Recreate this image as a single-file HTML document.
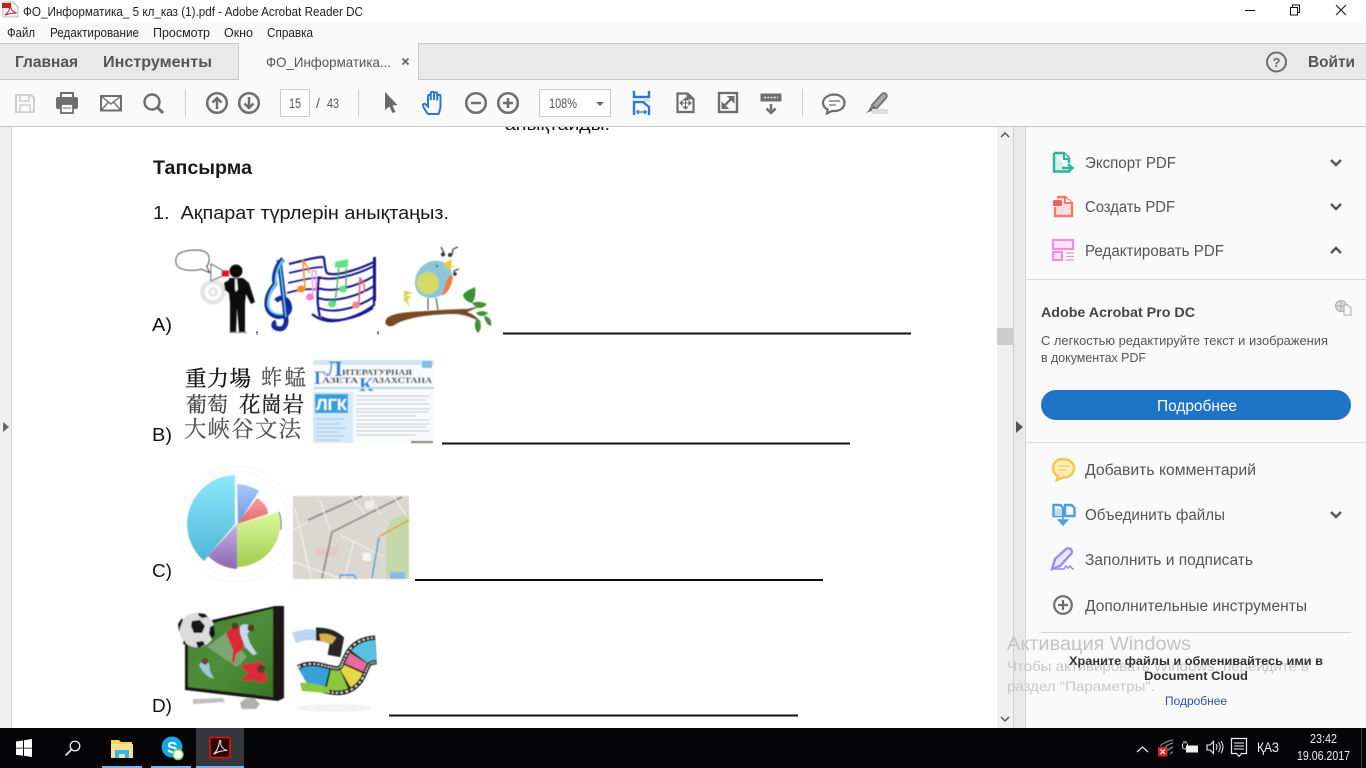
<!DOCTYPE html>
<html><head><meta charset="utf-8"><title>Acrobat</title>
<style>
html,body{margin:0;padding:0;background:#fff;width:1366px;height:768px;overflow:hidden}
svg{display:block}
text{font-family:"Liberation Sans","Noto Sans CJK SC",sans-serif}
.ic{fill:none;stroke:#6e6e6e;stroke-width:2.5}
.t{fill:#555}
</style></head><body>
<svg width="1366" height="768" viewBox="0 0 1366 768" xmlns="http://www.w3.org/2000/svg">
<defs>
<filter id="b" x="-10%" y="-10%" width="120%" height="120%"><feGaussianBlur stdDeviation="0.45"/></filter>
<filter id="b2" x="-10%" y="-10%" width="120%" height="120%"><feGaussianBlur stdDeviation="0.7"/></filter>
<linearGradient id="gc" x1="0" y1="0" x2="0" y2="1"><stop offset="0" stop-color="#8fe9fd"/><stop offset="1" stop-color="#4fb6d6"/></linearGradient>
<linearGradient id="gg" x1="0" y1="0" x2="0" y2="1"><stop offset="0" stop-color="#dcfb9c"/><stop offset="1" stop-color="#a0cc50"/></linearGradient>
<linearGradient id="gp" x1="0" y1="0" x2="0" y2="1"><stop offset="0" stop-color="#c8b0e8"/><stop offset="1" stop-color="#8a68b0"/></linearGradient>
<linearGradient id="gr" x1="0" y1="0" x2="0" y2="1"><stop offset="0" stop-color="#f4a0a0"/><stop offset="1" stop-color="#e06868"/></linearGradient>
<linearGradient id="gb" x1="0" y1="0" x2="0" y2="1"><stop offset="0" stop-color="#a8c8fa"/><stop offset="1" stop-color="#6c98e0"/></linearGradient>
<linearGradient id="gf" x1="0" y1="0" x2="1" y2="1"><stop offset="0" stop-color="#3f7f30"/><stop offset=".5" stop-color="#4f8f3a"/><stop offset="1" stop-color="#3a7428"/></linearGradient>
<clipPath id="docclip"><rect x="12" y="127" width="985" height="601"/></clipPath>
</defs>

<!-- base -->
<rect width="1366" height="768" fill="#fff"/>

<!-- document -->
<rect x="0" y="127" width="12" height="601" fill="#eeeeee"/>
<rect x="11" y="127" width="1" height="601" fill="#d4d4d4"/>
<path d="M3 422l6 5-6 5z" fill="#666"/>
<g clip-path="url(#docclip)">
<text x="505" y="130" font-size="17" fill="#111" textLength="105" lengthAdjust="spacingAndGlyphs">анықтайды.</text>
<text x="153" y="174" font-size="19.500" font-weight="700" fill="#1a1a1a" textLength="99" lengthAdjust="spacingAndGlyphs">Тапсырма</text>
<text x="153" y="219" font-size="18.500" fill="#1a1a1a" textLength="296" lengthAdjust="spacingAndGlyphs" xml:space="preserve">1.  Ақпарат түрлерін анықтаңыз.</text>
<text x="152" y="331" font-size="18" fill="#111" textLength="20" lengthAdjust="spacingAndGlyphs">A)</text>
<text x="152" y="441" font-size="18" fill="#111" textLength="20" lengthAdjust="spacingAndGlyphs">B)</text>
<text x="152" y="577" font-size="18" fill="#111" textLength="20" lengthAdjust="spacingAndGlyphs">C)</text>
<text x="152" y="712" font-size="18" fill="#111" textLength="20" lengthAdjust="spacingAndGlyphs">D)</text>
<text x="255" y="333" font-size="14" fill="#111">,</text>
<text x="376" y="333" font-size="14" fill="#111">,</text>
<rect x="503" y="332.500" width="408" height="2" fill="#111"/>
<rect x="442" y="442.500" width="408" height="2" fill="#111"/>
<rect x="415" y="579" width="408" height="2" fill="#111"/>
<rect x="389" y="714.500" width="409" height="2" fill="#111"/>

<!-- A: man -->
<g filter="url(#b)">
<circle cx="213" cy="292" r="10.500" fill="none" stroke="#e4e4e4" stroke-width="4.500"/>
<circle cx="213" cy="292" r="3.500" fill="none" stroke="#e4e4e4" stroke-width="3"/>
<path d="M190 250.500c8-1 15 0 18 4 2 4 1 9-1.500 12l3 6-8-3.500c-7 2-18 2-23-2-4-4-3-9 0-13 3-2 7-3 11.500-3.500z" fill="#fff" stroke="#222" stroke-width="1"/>
<path d="M211 264l11 6v6l-11 5z" fill="#fff" stroke="#555" stroke-width="1"/>
<rect x="222" y="270.500" width="7" height="6" fill="#e8101a"/>
<circle cx="236" cy="271" r="6.500" fill="#111"/>
<path d="M229 278h14l6 5 6 19-4 2-5-10-1 9v29h-6l-2-24-1 24h-6v-29l-1-10-4-3-1-7 5-3z" fill="#111"/>
<path d="M235 279h2l1 10-2 3-1-3z" fill="#eee"/>
<rect x="229" y="332" width="18" height="1" fill="#888"/>
</g>
<!-- A: music -->
<g filter="url(#b)" fill="none">
<path d="M289 264c10-2 24-7 34-7 2 0 1 11 4 16 8 4 30-3 47-11v43c-10 8-26 15-40 16-8 1-16-2-22-7" stroke="#14188a" stroke-width="2.200"/>
<path d="M289 273c10-2 24-6 34-6M288 283c10-2 24-6 33-5M287 293c10-3 22-5 32-3" stroke="#14188a" stroke-width="1.700"/>
<path d="M318 277c14 5 38-2 56-11M318 288c14 5 38-1 56-12M318 298c16 5 38-1 56-12M319 308c14 6 36 1 55-11M321 317c12 6 34 3 52-9" stroke="#14188a" stroke-width="2"/>
<path d="M319 277c-2 14-2 28 1 40" stroke="#14188a" stroke-width="2.200"/>
<rect x="373" y="257" width="3" height="44" fill="#14188a"/>
<path d="M283 259c-7 7-10 17-8 25-6 7-9 14-8 22 1 8 9 12 16 10 6-2 8-7 6-12-2-6-9-8-13-3M279 260c2 14 5 40 7 58 1 8-3 13-10 10-3-1-3-5 0-6" stroke="#152a9a" stroke-width="4.800"/>
<path d="M283 260c-6 8-8 16-7 24-6 7-8 14-8 21 2 8 9 10 15 9" stroke="#66dcf0" stroke-width="1.800"/>
<path d="M280 265c2 16 4 36 6 52" stroke="#66dcf0" stroke-width="1.200"/>
<ellipse cx="301" cy="289" rx="4" ry="3.500" fill="#ee8f24"/><path d="M305 288l-2-27c2 3 6 6 6 12" stroke="#ee8f24" stroke-width="1.500"/>
<ellipse cx="310" cy="297" rx="4" ry="3.500" fill="#ee7fd8"/><path d="M313 295l-1-24h4v20" stroke="#ee9fe0" stroke-width="1.500"/>
<ellipse cx="332" cy="304" rx="4" ry="3.500" fill="#60e080"/><path d="M335 303l4-35" stroke="#3f9a50" stroke-width="1.200"/>
<path d="M335 268l0-6 13-3v8z" fill="#60e080"/>
<ellipse cx="343" cy="289" rx="4" ry="3.500" fill="#60e080"/><path d="M346 288v-20" stroke="#3f9a50" stroke-width="1.200"/>
<ellipse cx="356" cy="305" rx="4" ry="3.500" fill="#f08a90"/><path d="M359 304l1-26c3 3 5 8 4 14" stroke="#e06070" stroke-width="1.500"/>
</g>
<!-- A: bird -->
<g filter="url(#b)">
<path d="M387 318c8-6 24-6 40-7 14-1 30-2 40-2l14-3-14 6c6 2 12 7 15 11-8-5-18-9-28-9-20 0-46 3-58 10-6 5-14 1-9-6z" fill="#7a4a22"/>
<path d="M415 285c-1-15 11-26 24-24 8 1 13 7 13 14 1 12-7 22-20 23-10 0-16-5-17-13z" fill="#8cc6da"/>
<circle cx="428" cy="283" r="11" fill="#d6da62"/>
<path d="M442 296c7-4 10-11 11-20l-3-1c-4 5-6 13-8 21z" fill="#ee7d3c"/>
<path d="M443 264l9-5-1 7 5 0-8 3z" fill="#f0cc30"/>
<circle cx="437" cy="266" r="1" fill="#222"/>
<path d="M404 290l9 3-7 2 6 2-4 2 2 10-4-8-2 1z" fill="#d8d860"/>
<path d="M428 298v12M436 298l2 12" stroke="#555" stroke-width="1.200"/>
<path d="M463 295c3-5 9-6 12-8 1 7 0 12-3 16-4-1-8-3-9-8zM472 303c5-2 11-1 15 1-4 5-10 6-15-1zM476 313c4-3 10-2 12 0-4 4-9 4-12 0zM477 318c-3 5-3 11 1 15 4-4 4-10-1-15zM484 316c1 5 3 9 7 10 1-4 0-9-7-10z" fill="#3e9230"/>
<path d="M441 247l3 6M453 249l-1 6M458 247l-5 2M459 269l-5 2v3" fill="none" stroke="#333" stroke-width="1.200"/>
<circle cx="443" cy="254.500" r="2" fill="#333"/><circle cx="450" cy="255" r="2" fill="#333"/>
<circle cx="455" cy="274" r="1.800" fill="#333"/>
</g>
<!-- B: hanzi -->
<g>
<text x="185" y="386" font-size="21.500" fill="#111" stroke="#111" stroke-width=".35" style="font-family:'Noto Serif CJK TC','Noto Serif CJK SC',serif" textLength="66">重力場</text>
<text x="261" y="385" font-size="21.500" fill="#555" stroke="#555" stroke-width=".2" style="font-family:'Noto Serif CJK SC',serif" textLength="45">蚱蜢</text>
<text x="186" y="412" font-size="21" fill="#444" stroke="#444" stroke-width=".2" style="font-family:'Noto Serif CJK SC',serif" textLength="42">葡萄</text>
<text x="239" y="412" font-size="21.500" fill="#222" stroke="#222" stroke-width=".3" style="font-family:'Noto Serif CJK SC',serif" textLength="65">花崗岩</text>
<text x="184" y="437" font-size="22.500" fill="#555" stroke="#555" stroke-width=".2" style="font-family:'Noto Serif CJK SC',serif" textLength="117">大峽谷文法</text>
</g>
<!-- B: newspaper -->
<g filter="url(#b)">
<rect x="313" y="360" width="121" height="83" fill="#f8fafb"/>
<rect x="313" y="360" width="121" height="5" fill="#d4e6f2"/>
<rect x="422" y="361" width="10" height="7" fill="#7cc0de"/>
<text x="342" y="375" font-size="8" font-weight="700" fill="#222" textLength="70" lengthAdjust="spacingAndGlyphs" style="font-family:'Liberation Serif',serif">ИТЕРАТУРНАЯ</text>
<text x="322" y="383" font-size="8" font-weight="700" fill="#222" textLength="36" lengthAdjust="spacingAndGlyphs" style="font-family:'Liberation Serif',serif">АЗЕТА</text>
<text x="372" y="383" font-size="8" font-weight="700" fill="#222" textLength="60" lengthAdjust="spacingAndGlyphs" style="font-family:'Liberation Serif',serif">АЗАХСТАНА</text>
<text x="314" y="384" font-size="19" font-weight="700" fill="#2c7fd0" style="font-family:'Liberation Serif',serif">Г</text>
<text x="326" y="376" font-size="22" font-weight="700" fill="#2c7fd0" style="font-family:'Liberation Serif',serif">Л</text>
<text x="359" y="391" font-size="20" font-weight="700" fill="#2c7fd0" style="font-family:'Liberation Serif',serif">К</text>
<rect x="313" y="387" width="121" height="2" fill="#b8d8ee"/>
<rect x="313" y="392" width="40" height="51" fill="#d6e9f7"/>
<rect x="315" y="394" width="33" height="19" fill="#35a0dc"/>
<text x="316" y="410" font-size="16" font-weight="700" fill="#fff" textLength="31" lengthAdjust="spacingAndGlyphs">ЛГК</text>
<path d="M316 419h28M316 424h24M316 428h30M316 432h22M316 436h28M316 440h24" stroke="#9ac8e8" stroke-width="1"/>
<path d="M356 396h74M356 400h70M356 404h74M356 409h74M356 412h72M356 416h60M356 420h74M356 424h74M356 427h70M356 431h74M356 435h60" stroke="#c2c7cc" stroke-width="1"/>
<rect x="411" y="441" width="22" height="2" fill="#8a7868"/>
</g>
<!-- C: pie -->
<g filter="url(#b)">
<circle cx="236" cy="524" r="58" fill="none" stroke="#f5f5f5" stroke-width="1"/>
<circle cx="236" cy="524" r="53" fill="none" stroke="#f6f6f6" stroke-width="1"/>
<path d="M235 524L235 475A49 49 0 0 0 204 561Z" fill="url(#gc)"/>
<path d="M237 524L208 556A46 46 0 0 0 237 569Z" fill="url(#gp)"/>
<path d="M237 524L279 512A44 44 0 0 1 237 567Z" fill="url(#gg)"/>
<path d="M279 512A44 44 0 0 1 281 530" fill="none" stroke="#666" stroke-width="1"/>
<path d="M237 524L257 498Q268 505 268 514Z" fill="url(#gr)"/>
<path d="M238 524L237 484Q250 485 259 491Z" fill="url(#gb)"/>
</g>
<!-- C: map -->
<g filter="url(#b)">
<rect x="293" y="496" width="116" height="83" fill="#dbd8d0"/>
<path d="M386 530l5-10 18-9v68h-23z" fill="#c4d9aa"/>
<rect x="390" y="572" width="15" height="7" fill="#8cb8e8"/>
<rect x="316" y="547" width="22" height="9" fill="#e6c9c5"/>
<path d="M332 532l70-35M332 532l-10 46M308 520l54-24" stroke="#8f8c88" stroke-width="1.800" fill="none"/>
<path d="M295 508l16 70M293 530l15-8M350 496l15 18M370 496l10 18M293 562l50 17M340 535l44 22M354 540l-10 39M393 496l14 20M320 500l10 30" stroke="#f2f0ea" stroke-width="1.200" fill="none"/>
<path d="M379 537l-7 41" stroke="#3c9ce8" stroke-width="1.500" fill="none"/>
<path d="M380 536l29-16" stroke="#e89a2a" stroke-width="1.500" fill="none"/>
<path d="M340 575h14l2 4M340 575v4" stroke="#3c9ce8" stroke-width="1.500" fill="none"/>
<rect x="363" y="553" width="8" height="8" fill="#f6f6f2"/>
<rect x="365" y="501" width="9" height="8" fill="#f0eee8"/>
</g>
<!-- D: TV -->
<g filter="url(#b)">
<path d="M193 699l30-1 2 4-32 2z" fill="#c0c0c0"/>
<path d="M240 703l6-5 8 0 6 6-4 5-14 0z" fill="#b0b0b0"/>
<path d="M185 690L185 638 212 620 275 606h9v92l-6 3z" fill="#1e1616"/>
<path d="M188 687V640l25-17 60-14.500V697z" fill="url(#gf)"/>
<path d="M207 647l30 20 10-10-20-25z" fill="#9fb59f" opacity=".6"/>
<path d="M226 633c3-4 8-6 11-6 5-2 7 3 5 6l-1 6 4 0-3 11-6 4-2 9-2-1 1-12-4-10z" fill="#d92c34"/>
<path d="M240 627c1-2 5-4 8-2 3 3 2 7-1 9l3 9 7 11-4 1-8-8-5-14z" fill="#c6d8ec"/>
<circle cx="235" cy="626" r="3.500" fill="#5a3a20"/>
<circle cx="251" cy="628" r="3.500" fill="#5a3a20"/>
<path d="M199 665c3-5 8-5 10-2l1 8 4 8-5-2-6-5z" fill="#a0c8d8"/>
<circle cx="205" cy="661" r="3.500" fill="#6a4a30"/>
<path d="M240 665l14-2c5-3 10-1 10 5l3 12-6 3-7-3-13 1 7-8z" fill="#d92c34"/>
<circle cx="261" cy="669" r="4" fill="#5a3a20"/>
<circle cx="197" cy="630" r="17.500" fill="#dcdcdc"/>
<path d="M192 621l8-1 5 6-3 7-8 0-3-7zM183 620l-3 8-1 4-1-8 4-6zM199 613l6 1 3 3-6 1-4-3zM214 625l1 10-3 4-3-5 1-7zM196 642l7-1 2 4-7 3zM184 640l3 5-4-1z" fill="#151515"/>
</g>
<!-- D: film -->
<g filter="url(#b)" fill="none">
<ellipse cx="335" cy="708" rx="38" ry="4" fill="#f2f2f2"/>
<path d="M294 638c10-4 20-4 28-2l16 6" stroke="#a8c8e8" stroke-width="11" opacity=".75"/>
<path d="M316 634c8 0 16 2 21 6l-3 16" stroke="#282828" stroke-width="13"/>
<path d="M320 638c5-1 10 0 14 3" stroke="#d8b048" stroke-width="8"/>
<path d="M304 678C318 670 340 692 352 672C358 660 358 651 376 650" stroke="#222" stroke-width="29"/>
<path d="M304 678C318 670 340 692 352 672C358 660 358 651 376 650" stroke="#eee" stroke-width="26" stroke-dasharray="1.500 1.500"/>
<path d="M304 678C318 670 340 692 352 672C358 660 358 651 376 650" stroke="#222" stroke-width="23"/>
<path d="M304 678C318 670 340 692 352 672C358 660 358 651 376 650" stroke="#38a2d8" stroke-width="20" pathLength="100" stroke-dasharray="27 73"/>
<path d="M304 678C318 670 340 692 352 672C358 660 358 651 376 650" stroke="#8cc83c" stroke-width="20" pathLength="100" stroke-dasharray="18 82" stroke-dashoffset="-29"/>
<path d="M304 678C318 670 340 692 352 672C358 660 358 651 376 650" stroke="#e8d848" stroke-width="20" pathLength="100" stroke-dasharray="14 86" stroke-dashoffset="-49"/>
<path d="M304 678C318 670 340 692 352 672C358 660 358 651 376 650" stroke="#e86a9c" stroke-width="20" pathLength="100" stroke-dasharray="12 88" stroke-dashoffset="-65"/>
<path d="M304 678C318 670 340 692 352 672C358 660 358 651 376 650" stroke="#58c0e0" stroke-width="20" pathLength="100" stroke-dasharray="21 79" stroke-dashoffset="-79"/>
<path d="M300 683c10-2 22 4 30 4l-2 6-26-2z" fill="#8cc83c" stroke="none"/>
</g>
</g>

<!-- scrollbar -->
<rect x="997" y="127" width="16" height="601" fill="#f0f0f0"/>
<rect x="997" y="328" width="16" height="17" fill="#cdcdcd"/>
<path d="M1001 137l4-4 4 4" fill="none" stroke="#555" stroke-width="1.500"/>
<path d="M1001 717l4 4 4-4" fill="none" stroke="#555" stroke-width="1.500"/>
<rect x="1013" y="127" width="12" height="601" fill="#e9e9e9"/>
<rect x="1013" y="127" width="1" height="601" fill="#cfcfcf"/>
<rect x="1025" y="127" width="1" height="601" fill="#d6d6d6"/>
<path d="M1016 421l7 6-7 6z" fill="#555"/>

<!-- right panel -->
<rect x="1026" y="127" width="340" height="601" fill="#fafafa"/>
<g font-size="15.500">
<text x="1085" y="168" textLength="91" lengthAdjust="spacingAndGlyphs" fill="#555">Экспорт PDF</text>
<text x="1085" y="212" textLength="90" lengthAdjust="spacingAndGlyphs" fill="#555">Создать PDF</text>
<text x="1085" y="256" textLength="139" lengthAdjust="spacingAndGlyphs" fill="#555">Редактировать PDF</text>
<text x="1085" y="475" textLength="171" lengthAdjust="spacingAndGlyphs" fill="#555">Добавить комментарий</text>
<text x="1085" y="520" textLength="140" lengthAdjust="spacingAndGlyphs" fill="#555">Объединить файлы</text>
<text x="1085" y="565" textLength="168" lengthAdjust="spacingAndGlyphs" fill="#555">Заполнить и подписать</text>
<text x="1085" y="611" textLength="222" lengthAdjust="spacingAndGlyphs" fill="#555">Дополнительные инструменты</text>
</g>
<g fill="none" stroke="#555" stroke-width="2.400">
<path d="M1331 160l5 5 5-5"/><path d="M1331 204l5 5 5-5"/><path d="M1331 253l5-5 5 5"/><path d="M1331 512l5 5 5-5"/>
</g>
<rect x="1026" y="279" width="340" height="1" fill="#dcdcdc"/>
<rect x="1026" y="442" width="340" height="1" fill="#dcdcdc"/>
<text x="1041" y="317" font-size="13.500" font-weight="700" fill="#444" textLength="154" lengthAdjust="spacingAndGlyphs">Adobe Acrobat Pro DC</text>
<text x="1041" y="345" font-size="13" fill="#555" textLength="287" lengthAdjust="spacingAndGlyphs">С легкостью редактируйте текст и изображения</text>
<text x="1041" y="362" font-size="13" fill="#555" textLength="105" lengthAdjust="spacingAndGlyphs">в документах PDF</text>
<rect x="1041" y="390" width="310" height="30" rx="15" fill="#2074c8"/>
<text x="1157" y="411" font-size="15.500" fill="#fff" textLength="80" lengthAdjust="spacingAndGlyphs">Подробнее</text>
<!-- panel icons -->
<path d="M1054 153h10l5 5v5M1069 170v1.500h-15V153" fill="#d8efea" stroke="#2fb297" stroke-width="2.400"/>
<path d="M1064 153v6h5" fill="#fff" stroke="#2fb297" stroke-width="2"/>
<path d="M1062 168h9M1068 164l4.500 4-4.500 4" fill="none" stroke="#2fb297" stroke-width="2.400"/>
<path d="M1057 197h8l7 6v13h-17v-9" fill="#fde0dc" stroke="#f27a6a" stroke-width="2.400"/>
<path d="M1065 197v6h7" fill="#fff" stroke="#f27a6a" stroke-width="2"/>
<rect x="1053" y="200" width="9" height="6" rx="1.500" fill="#f0605a"/>
<rect x="1053" y="240" width="20" height="9" fill="#fbe4f7" stroke="#ef8de0" stroke-width="2.200"/>
<rect x="1053" y="252" width="9" height="8" fill="#fbe4f7" stroke="#ef8de0" stroke-width="2.200"/>
<path d="M1066 253h8M1066 256.500h8M1066 260h8" stroke="#ef8de0" stroke-width="1.200"/>
<circle cx="1341" cy="306" r="5.500" fill="#ddd" stroke="#aaa" stroke-width="1"/>
<path d="M1341 300v12M1335.500 306h11" stroke="#aaa" stroke-width="1"/>
<path d="M1344 305h4l3 3v7h-7z" fill="#fafafa" stroke="#aaa" stroke-width="1"/>
<path d="M1063 459c6 0 11 4 11 9.500s-5 9-11 9l-6 2.500 1-4c-3-1.500-5-4-5-7.500 0-5.500 4-9.500 10-9.500z" fill="#fdeeb8" stroke="#f8c453" stroke-width="2.500"/>
<path d="M1058 466h11M1058 470h8" stroke="#f8c453" stroke-width="1.200"/>
<path d="M1053.500 505h7l2.500 3v8h-9.500zM1065 505h6.500l3 3v8H1065z" fill="#fafafa" stroke="#4aa0e0" stroke-width="2.400"/>
<rect x="1055" y="509" width="7" height="7" fill="#bfdff6"/>
<path d="M1063 516v5M1058.500 520h9l-4.500 5z" fill="#4aa0e0" stroke="#4aa0e0" stroke-width="1.500"/>
<path d="M1052 569l3-10 11-10c2-1.500 4-.5 5 .5s1.500 3 0 4.500l-11 12z" fill="#e9e5fc" stroke="#9a8cf0" stroke-width="2.400"/>
<path d="M1053 569h11c1 0 1-3 2-3s1 2 2 2 1-2 2-2 1 3 4 3" fill="none" stroke="#9a8cf0" stroke-width="1.500"/>
<circle cx="1063" cy="605" r="8.800" fill="none" stroke="#6e6e6e" stroke-width="2.200"/>
<path d="M1058 605h10M1063 600v10" stroke="#6e6e6e" stroke-width="2.200"/>
<rect x="1041" y="632" width="310" height="1" fill="#d4d4d4"/>
<text x="1007" y="650" font-size="19" fill="#c4c4c4" textLength="184" lengthAdjust="spacingAndGlyphs">Активация Windows</text>
<text x="1007" y="671" font-size="14" fill="#c8c8c8" textLength="302" lengthAdjust="spacingAndGlyphs">Чтобы активировать Windows, перейдите в</text>
<text x="1007" y="691" font-size="14" fill="#c8c8c8" textLength="148" lengthAdjust="spacingAndGlyphs">раздел "Параметры".</text>
<text x="1069" y="665" font-size="12" font-weight="700" fill="#333" textLength="254" lengthAdjust="spacingAndGlyphs">Храните файлы и обменивайтесь ими в</text>
<text x="1144" y="680" font-size="12" font-weight="700" fill="#333" textLength="104" lengthAdjust="spacingAndGlyphs">Document Cloud</text>
<text x="1165" y="705" font-size="12" fill="#2a50b0" textLength="62" lengthAdjust="spacingAndGlyphs">Подробнее</text>

<!-- title bar -->
<rect x="0" y="0" width="1366" height="23" fill="#fff"/>
<path d="M3 2h10l5 5v10H3z" fill="#f4f4f4" stroke="#bbb" stroke-width="1"/>
<rect x="2" y="3" width="9" height="5" fill="#c81e1e"/>
<path d="M5 15c3-2 5-6 5.500-9 .5 4 2.500 6 6 7-3 0-7 .5-11.500 2z" fill="none" stroke="#c81e1e" stroke-width="1"/>
<text x="23" y="16" font-size="12.500" fill="#222" textLength="340" lengthAdjust="spacingAndGlyphs">ФО_Информатика_ 5 кл_каз (1).pdf - Adobe Acrobat Reader DC</text>
<rect x="1245" y="10" width="10" height="1" fill="#111"/>
<path d="M1290.500 7.500h7v7.500h-7zM1292.500 7.500v-2.500h7v7.500h-2" fill="none" stroke="#111" stroke-width="1"/>
<path d="M1336 5l10 10M1346 5l-10 10" stroke="#111" stroke-width="1"/>

<!-- menu -->
<rect x="0" y="23" width="1366" height="20" fill="#f9f9f9"/>
<g font-size="12.500" fill="#222">
<text x="7" y="37" textLength="28" lengthAdjust="spacingAndGlyphs">Файл</text>
<text x="50" y="37" textLength="89" lengthAdjust="spacingAndGlyphs">Редактирование</text>
<text x="153" y="37" textLength="57" lengthAdjust="spacingAndGlyphs">Просмотр</text>
<text x="224" y="37" textLength="29" lengthAdjust="spacingAndGlyphs">Окно</text>
<text x="267" y="37" textLength="46" lengthAdjust="spacingAndGlyphs">Справка</text>
</g>
<!-- tabs -->
<rect x="0" y="43" width="1366" height="1" fill="#c8c8c8"/>
<rect x="0" y="44" width="1366" height="35" fill="#e9e9e9"/>
<rect x="0" y="79" width="1366" height="1" fill="#c8c8c8"/>
<rect x="239" y="43" width="179" height="37" fill="#fafafa"/>
<rect x="238" y="43" width="1" height="37" fill="#c8c8c8"/>
<rect x="418" y="43" width="1" height="37" fill="#c8c8c8"/>
<text x="15" y="67" font-size="16" font-weight="700" fill="#555" textLength="63" lengthAdjust="spacingAndGlyphs">Главная</text>
<text x="103" y="67" font-size="16" font-weight="700" fill="#555" textLength="109" lengthAdjust="spacingAndGlyphs">Инструменты</text>
<text x="266" y="67" font-size="14" fill="#555" textLength="125" lengthAdjust="spacingAndGlyphs">ФО_Информатика...</text>
<path d="M402.500 58.500l6 6M408.500 58.500l-6 6" stroke="#666" stroke-width="1.800"/>
<circle cx="1276.500" cy="62" r="9.500" fill="none" stroke="#6e6e6e" stroke-width="2"/>
<text x="1272.500" y="67" font-size="13" font-weight="700" fill="#6e6e6e">?</text>
<text x="1308" y="67" font-size="16" font-weight="700" fill="#555" textLength="47" lengthAdjust="spacingAndGlyphs">Войти</text>

<!-- toolbar -->
<rect x="0" y="80" width="1366" height="46" fill="#fafafa"/>
<rect x="0" y="126" width="1366" height="1" fill="#c8c8c8"/>
<!-- save -->
<path d="M16 95h15l3 3v14H16z" fill="none" stroke="#cfcfcf" stroke-width="2"/>
<rect x="20" y="95" width="9" height="6" fill="none" stroke="#cfcfcf" stroke-width="1.500"/>
<rect x="20" y="105" width="10" height="7" fill="#fafafa" stroke="#cfcfcf" stroke-width="1.500"/>
<!-- print -->
<rect x="61" y="93" width="12" height="5" fill="none" stroke="#6e6e6e" stroke-width="2"/>
<rect x="56" y="97" width="22" height="12" rx="2" fill="#6e6e6e"/>
<rect x="61" y="104" width="12" height="9" fill="#fafafa" stroke="#6e6e6e" stroke-width="1.800"/>
<path d="M63 108h8" stroke="#6e6e6e" stroke-width="1"/>
<!-- mail -->
<rect x="101" y="96" width="20" height="14.500" fill="none" stroke="#6e6e6e" stroke-width="2"/>
<path d="M101 96l10 8 10-8M101 110.500l7.500-8.500M121 110.500l-7.500-8.500" fill="none" stroke="#6e6e6e" stroke-width="1.400"/>
<!-- search -->
<circle cx="152" cy="102" r="7.500" fill="none" stroke="#6e6e6e" stroke-width="2.400"/>
<path d="M157.500 107.500l5.500 5.500" stroke="#6e6e6e" stroke-width="3"/>
<rect x="185" y="89" width="1" height="28" fill="#cfcfcf"/>
<!-- up/down -->
<circle cx="217" cy="103" r="9.800" class="ic"/><path d="M217 109v-11M212.500 102.500l4.500-4.500 4.500 4.500" class="ic"/>
<circle cx="249" cy="103" r="9.800" class="ic"/><path d="M249 97v11M244.500 103.500l4.500 4.500 4.500-4.500" class="ic"/>
<rect x="280.500" y="89.500" width="29" height="27" fill="#fff" stroke="#ccc"/>
<text x="289" y="108" font-size="14" fill="#555" textLength="12" lengthAdjust="spacingAndGlyphs">15</text>
<text x="316" y="108" font-size="14" fill="#555">/</text>
<text x="327" y="108" font-size="14" fill="#555" textLength="12" lengthAdjust="spacingAndGlyphs">43</text>
<rect x="358" y="89" width="1" height="28" fill="#cfcfcf"/>
<!-- cursor -->
<path d="M385 92l12.500 13-5 .5 3 6.500-3 1-3-6.500-4.500 3.500z" fill="#6a6a6a"/>
<!-- hand -->
<path d="M428 114c-2-3-5-6-5-9 0-1.500 2-1.500 3-.5l2 2V96c0-1.500 2.800-1.500 2.800 0v4-7c0-1.500 3.200-1.500 3.200 0v7-6.500c0-1.500 3.200-1.500 3.200 0v7-4.500c0-1.500 3.300-1.500 3.300 0v10c0 3-1 5-2 8z" fill="none" stroke="#2b7ad0" stroke-width="2"/>
<!-- zoom -->
<circle cx="476" cy="103" r="9.800" class="ic"/><path d="M471 103h10" class="ic"/>
<circle cx="508" cy="103" r="9.800" class="ic"/><path d="M503 103h10M508 98v10" class="ic"/>
<rect x="539.500" y="89.500" width="71" height="27" fill="#fff" stroke="#ccc"/>
<text x="549" y="108" font-size="14" fill="#555" textLength="28" lengthAdjust="spacingAndGlyphs">108%</text>
<path d="M596 102h8l-4 4z" fill="#666"/>
<!-- fit width -->
<path d="M634 91v6h15v-6" fill="none" stroke="#2b7ad0" stroke-width="2.400"/>
<rect x="643" y="98" width="7" height="4" fill="#dcdcdc"/>
<path d="M634 115v-13h9l6 5v8" fill="none" stroke="#2b7ad0" stroke-width="2.400"/>
<path d="M637 112h9M639 110l-2.500 2 2.500 2M644 110l2.500 2-2.500 2" fill="none" stroke="#2b7ad0" stroke-width="1.200"/>
<!-- full page -->
<path d="M677.500 93.500h10l6 5.500v13h-16z" fill="none" stroke="#6e6e6e" stroke-width="2.200"/>
<path d="M687 94v5h6M680 103h11M685.500 98v11M680 103l2-2v4zM691 103l-2-2v4zM685.500 98l-2 2h4zM685.500 109l-2-2h4z" fill="#6e6e6e" stroke="#6e6e6e" stroke-width="1"/>
<!-- fullscreen -->
<rect x="719" y="93" width="18" height="19" fill="none" stroke="#6e6e6e" stroke-width="2.400"/>
<path d="M728 96.500h6v6zM728 108.500h-6v-6z" fill="#6e6e6e" stroke="#6e6e6e"/>
<path d="M732 98l-8 8" stroke="#6e6e6e" stroke-width="2.400"/>
<!-- read -->
<rect x="760.500" y="93.500" width="21" height="8" fill="#6e6e6e"/>
<path d="M764 97.500h14" stroke="#eee" stroke-width="1.600" stroke-dasharray="2 1.300"/>
<path d="M771 104v9M766.500 108.500l4.500 4.500 4.500-4.500" class="ic"/>
<rect x="802" y="89" width="1" height="28" fill="#cfcfcf"/>
<!-- comment -->
<path d="M834 94.500c6 0 10.500 3.600 10.500 8.500s-4.500 8-10.500 8h-2l-5 2.500 .5-4c-2.700-1.500-4.500-3.800-4.500-6.500 0-4.900 5.500-8.500 11.500-8.500z" fill="none" stroke="#6e6e6e" stroke-width="2.200"/>
<path d="M829 101h11M829 105h7" stroke="#6e6e6e" stroke-width="1.200"/>
<!-- highlight -->
<path d="M872 105l10-11c1-1 3-1 4 0s1 3 0 4l-10 11z" fill="#aaa" stroke="#777" stroke-width="2"/>
<path d="M872 105l4 4-5 2-2-2zM866 113l4-4 2 2z" fill="#777"/>
<rect x="872" y="109" width="16" height="5" fill="#dcdcdc"/>

<!-- taskbar -->
<rect x="0" y="728" width="1366" height="40" fill="#050507"/>
<rect x="196" y="728" width="48" height="40" fill="#36373b"/>
<rect x="102" y="766" width="40" height="2" fill="#76b9ed"/>
<rect x="151" y="766" width="40" height="2" fill="#76b9ed"/>
<rect x="196" y="766" width="48" height="2" fill="#76b9ed"/>
<path d="M16 741.500l7-1v7.200h-7zM24 740.300l8-1.300v8.700h-8zM16 748.500h7v7.300l-7-1zM24 748.500h8V757l-8-1.200z" fill="#fff"/>
<circle cx="75" cy="746" r="4.800" fill="none" stroke="#fff" stroke-width="1.200"/>
<path d="M71.500 749.500l-6 6" stroke="#fff" stroke-width="1.500"/>
<path d="M111 740h8l2 2h11v16h-21z" fill="#f6cf5e"/>
<rect x="111" y="744" width="22" height="14" fill="#fbe08d"/>
<path d="M115 758v-8h14v8h-4v-4h-6v4z" fill="#35b4ee"/>
<circle cx="172" cy="747" r="10.500" fill="#12a8e8"/>
<text x="167" y="753" font-size="16" font-weight="700" fill="#fff">S</text>
<circle cx="178" cy="754.500" r="5" fill="#fff" stroke="#8cc63c" stroke-width="1.500"/>
<rect x="210" y="737.500" width="20" height="20" fill="#2a0505" stroke="#d4190c" stroke-width="1.600"/>
<path d="M213.500 754c3-2 5-7 6-12.500.3-2 1.700-1 1.200 1-.5 3 2 7 6.500 8-4 0-9.500 1-12 3z" fill="none" stroke="#eee" stroke-width="1"/>
<path d="M1137 752l5.500-5 5.500 5" fill="none" stroke="#eee" stroke-width="1.200"/>
<path d="M1160 746q6-5 13-6M1164 748q4-4 9-5M1167 751q3-3 6-4M1170 754q2-2 3-2" fill="none" stroke="#888" stroke-width="1.200"/>
<rect x="1158" y="747" width="9.500" height="9.500" rx="1" fill="#d8242c"/>
<path d="M1160.500 749.500l4.500 4.500M1165 749.500l-4.500 4.500" stroke="#fff" stroke-width="1.200"/>
<rect x="1186" y="745.500" width="12" height="7" fill="#eee"/>
<path d="M1182.500 743.500v3a2.500 2.500 0 0 0 5 0v-3M1184 741v2.500M1186 741v2.500" fill="none" stroke="#eee" stroke-width="1"/>
<path d="M1207 745h3l3.500-3.500v12l-3.500-3.500h-3z" fill="none" stroke="#eee" stroke-width="1.100"/>
<path d="M1216 744q2 3 0 6M1218.500 742q3.500 5 0 10M1221 741q4 6 0 12" fill="none" stroke="#eee" stroke-width="1"/>
<path d="M1231.500 738.500h15v15h-5l-2.500 3-2.500-3h-5z" fill="none" stroke="#eee" stroke-width="1.200"/>
<path d="M1234 743h10M1234 746h10M1234 749h10" stroke="#eee" stroke-width="1"/>
<text x="1257" y="752" font-size="13.500" fill="#eee" textLength="22" lengthAdjust="spacingAndGlyphs">ҚАЗ</text>
<text x="1310" y="743" font-size="13" fill="#eee" textLength="27" lengthAdjust="spacingAndGlyphs">23:42</text>
<text x="1297" y="760" font-size="13" fill="#eee" textLength="53" lengthAdjust="spacingAndGlyphs">19.06.2017</text>
<rect x="1361" y="728" width="1" height="40" fill="#3a3a3a"/>
</svg>
</body></html>
